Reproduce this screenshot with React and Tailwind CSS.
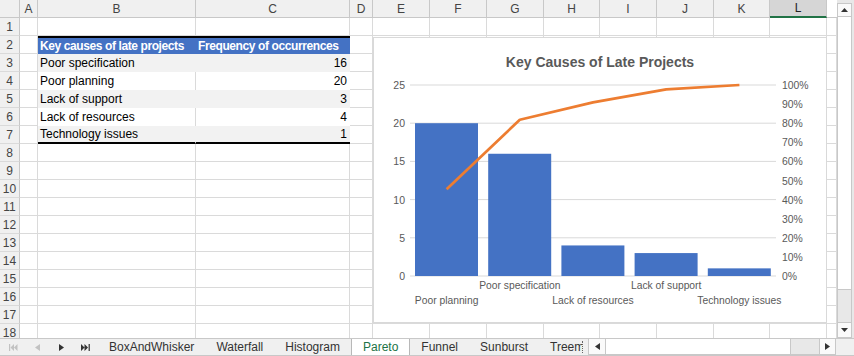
import React from 'react';

const cols = [
  { k: 'A', w: 'w-[18px]' },
  { k: 'B', w: 'w-[158px]' },
  { k: 'C', w: 'w-[154px]' },
  { k: 'D', w: 'w-[23px]' },
  { k: 'E', w: 'w-[57px]' },
  { k: 'F', w: 'w-[57px]' },
  { k: 'G', w: 'w-[57px]' },
  { k: 'H', w: 'w-[56px]' },
  { k: 'I', w: 'w-[57px]' },
  { k: 'J', w: 'w-[57px]' },
  { k: 'K', w: 'w-[56px]' },
  { k: 'L', w: 'w-[57px]' },
  { k: 'M', w: 'w-[10px]' },
];

const data = [
  ['Poor specification', 16],
  ['Poor planning', 20],
  ['Lack of support', 3],
  ['Lack of resources', 4],
  ['Technology issues', 1],
];

const rows = Array.from({ length: 18 }, (_, i) => i + 1);

const Cell = ({ row, col }) => {
  const base = `${col.w} h-[18px] shrink-0 box-border flex items-center`;
  if ((col.k === 'B' || col.k === 'C') && row >= 2 && row <= 7) {
    const right = col.k === 'C';
    if (row === 2) {
      return (
        <div className={`${base} bg-[#4472c4] border-t-2 border-black text-white font-bold text-[12px] tracking-[-0.4px] pl-[2px] whitespace-nowrap overflow-hidden`}>
          {right ? 'Frequency of occurrences' : 'Key causes of late projects'}
        </div>
      );
    }
    const [label, n] = data[row - 3];
    const shaded = row % 2 === 1;
    return (
      <div
        className={`${base} text-[12px] text-black whitespace-nowrap ${shaded ? 'bg-[#f2f2f2]' : 'bg-white'} ${
          right ? 'justify-end pr-[3px]' : 'pl-[2px] border-r border-[#dadada]'
        } ${row === 7 ? 'border-b-2 border-b-black' : ''} ${shaded && !right ? 'border-r-[#f2f2f2]' : ''}`}
      >
        {right ? n : label}
      </div>
    );
  }
  return <div className={`${base} border-r border-b border-[#dadada] bg-white`} />;
};

const Chart = () => {
  const left = 37;
  const base = 239;
  const unit = 191 / 25;
  const step = 73.2;
  const order = [
    ['Poor planning', 20],
    ['Poor specification', 16],
    ['Lack of resources', 4],
    ['Lack of support', 3],
    ['Technology issues', 1],
  ];
  const total = 44;
  let acc = 0;
  const pts = order.map(([, v], i) => {
    acc += v;
    return `${left + step * (i + 0.5)},${base - (acc / total) * 191}`;
  });
  return (
    <div className="absolute left-[373px] top-[19px] w-[454px] h-[286px] bg-white border border-[#d9d9d9]">
      <svg width="454" height="286" className="absolute -left-px -top-px" fontFamily="'Liberation Sans', Arial, sans-serif">
        <text x="227" y="30" textAnchor="middle" fontSize="14" fontWeight="bold" fill="#595959">
          Key Causes of Late Projects
        </text>
        {[0, 5, 10, 15, 20, 25].map((v) => {
          const y = base - v * unit;
          return (
            <g key={v}>
              <line x1={left} x2="403" y1={y} y2={y} stroke="#d9d9d9" strokeWidth="1" />
              <text x="32" y={y + 4} textAnchor="end" fontSize="10.5" fill="#595959">
                {v}
              </text>
            </g>
          );
        })}
        {Array.from({ length: 11 }, (_, i) => i * 10).map((p) => (
          <text key={p} x="409" y={base - p * 1.91 + 4} fontSize="10.4" fill="#595959">
            {p}%
          </text>
        ))}
        {order.map(([name, v], i) => (
          <g key={name}>
            <rect x={left + step * i + 5} y={base - v * unit} width="63" height={v * unit} fill="#4472c4" />
            <text
              x={left + step * (i + 0.5)}
              y={i % 2 === 0 ? 267 : 252}
              textAnchor="middle"
              fontSize="10.3"
              fill="#595959"
            >
              {name}
            </text>
          </g>
        ))}
        <polyline points={pts.join(' ')} fill="none" stroke="#ed7d31" strokeWidth="2.7" strokeLinejoin="round" />
      </svg>
    </div>
  );
};

const Tri = ({ dir = 'right', color = '#444' }) => (
  <svg width="5" height="7" viewBox="0 0 5 7">
    <path d={dir === 'right' ? 'M0 0 L5 3.5 L0 7 Z' : 'M5 0 L0 3.5 L5 7 Z'} fill={color} />
  </svg>
);

const NavButtons = () => (
  <div className="flex w-[98px] shrink-0 pl-[1px]">
    <div className="w-6 flex items-center justify-center">
      <svg width="9" height="7" viewBox="0 0 9 7">
        <rect x="0" y="0" width="1.2" height="7" fill="#c2c2c2" />
        <path d="M5 0 L1.5 3.5 L5 7 Z M8.5 0 L5 3.5 L8.5 7 Z" fill="#c2c2c2" />
      </svg>
    </div>
    <div className="w-6 flex items-center justify-center">
      <Tri dir="left" color="#c2c2c2" />
    </div>
    <div className="w-6 flex items-center justify-center">
      <Tri dir="right" color="#333" />
    </div>
    <div className="w-6 flex items-center justify-center">
      <svg width="9" height="7" viewBox="0 0 9 7">
        <path d="M0 0 L3.5 3.5 L0 7 Z M3.5 0 L7 3.5 L3.5 7 Z" fill="#333" />
        <rect x="7.6" y="0" width="1.2" height="7" fill="#333" />
      </svg>
    </div>
  </div>
);

const tabs = ['BoxAndWhisker', 'Waterfall', 'Histogram', 'Pareto', 'Funnel', 'Sunburst', 'Treemap'];

export default function App() {
  return (
    <div className="w-[854px] h-[356px] overflow-hidden bg-white font-['Liberation_Sans',Arial,sans-serif] text-[#444] select-none">
      <div className="flex h-[338px]">
        {/* grid */}
        <div className="w-[837px] h-[338px] overflow-hidden flex flex-col">
          <div className="flex h-[18px] shrink-0">
            <div className="w-[20px] h-[18px] shrink-0 box-border bg-[#f0f0f0] border-r border-b border-[#c8c8c8]" />
            {cols.map((c) => (
              <div
                key={c.k}
                className={`${c.w} h-[18px] shrink-0 box-border flex items-center justify-center text-[12px] ${
                  c.k === 'L'
                    ? 'bg-[#d6d6d6] border-b-2 border-b-[#217346] border-r border-r-[#c8c8c8] text-[#222]'
                    : c.k === 'M'
                    ? 'bg-white border-b border-[#c8c8c8]'
                    : 'bg-[#f0f0f0] border-r border-b border-[#c8c8c8]'
                }`}
              >
                {c.k === 'M' ? '' : c.k}
              </div>
            ))}
          </div>
          <div className="relative flex-1">
            {rows.map((r) => (
              <div key={r} className="flex h-[18px]">
                <div className="w-[20px] h-[18px] shrink-0 box-border bg-[#f0f0f0] border-r border-b border-r-[#c8c8c8] border-b-[#dadada] flex items-center justify-center text-[12px]">
                  {r}
                </div>
                {cols.map((c) => (
                  <Cell key={c.k} row={r} col={c} />
                ))}
              </div>
            ))}
            <Chart />
          </div>
        </div>
        {/* vertical scrollbar */}
        <div className="w-[17px] h-[338px] shrink-0 bg-[#e8e8e8] pt-[3px] pr-[2px] flex flex-col">
          <div className="h-[14px] bg-[#fafafa] border border-[#c8c8c8] flex items-center justify-center">
            <svg width="7" height="4" viewBox="0 0 7 4"><path d="M0 4 L3.5 0 L7 4 Z" fill="#333" /></svg>
          </div>
          <div className="h-[273px] bg-white border-x border-b border-[#c8c8c8]" />
          <div className="flex-1 border-x border-[#c8c8c8]" />
          <div className="h-[16px] bg-[#fafafa] border border-[#c8c8c8] flex items-center justify-center">
            <svg width="7" height="4" viewBox="0 0 7 4"><path d="M0 0 L3.5 4 L7 0 Z" fill="#333" /></svg>
          </div>
        </div>
      </div>
      {/* sheet tabs */}
      <div className="flex h-[18px] bg-[#f0f0f0] border-b border-[#c8c8c8]">
        <div className="flex w-[582px] shrink-0 overflow-hidden border-t border-[#c8c8c8]">
          <NavButtons />
          {tabs.map((t) =>
            t === 'Pareto' ? (
              <div key={t} className="-mt-px h-[18px] px-[11px] bg-white border-x border-[#b8b8b8] text-[#217346] text-[12px] flex items-center whitespace-nowrap">
                {t}
              </div>
            ) : (
              <div key={t} className="px-[11px] text-[12px] text-[#333] flex items-center whitespace-nowrap">
                {t}
              </div>
            )
          )}
        </div>
        <div className="w-[6px] shrink-0 border-t border-[#c8c8c8] flex items-center">
          <div className="h-[12px] border-l border-dotted border-[#666]" />
        </div>
        <div className="w-[248px] shrink-0 border border-[#c8c8c8] bg-[#e8e8e8] flex">
          <div className="w-[16px] bg-[#fafafa] flex items-center justify-center">
            <Tri dir="left" color="#333" />
          </div>
          <div className="w-[186px] bg-white border-x border-[#c8c8c8]" />
          <div className="flex-1" />
          <div className="w-[16px] bg-[#fafafa] border-l border-[#c8c8c8] flex items-center justify-center">
            <Tri dir="right" color="#333" />
          </div>
        </div>
        <div className="flex-1 border-t border-[#c8c8c8]" />
      </div>
    </div>
  );
}
